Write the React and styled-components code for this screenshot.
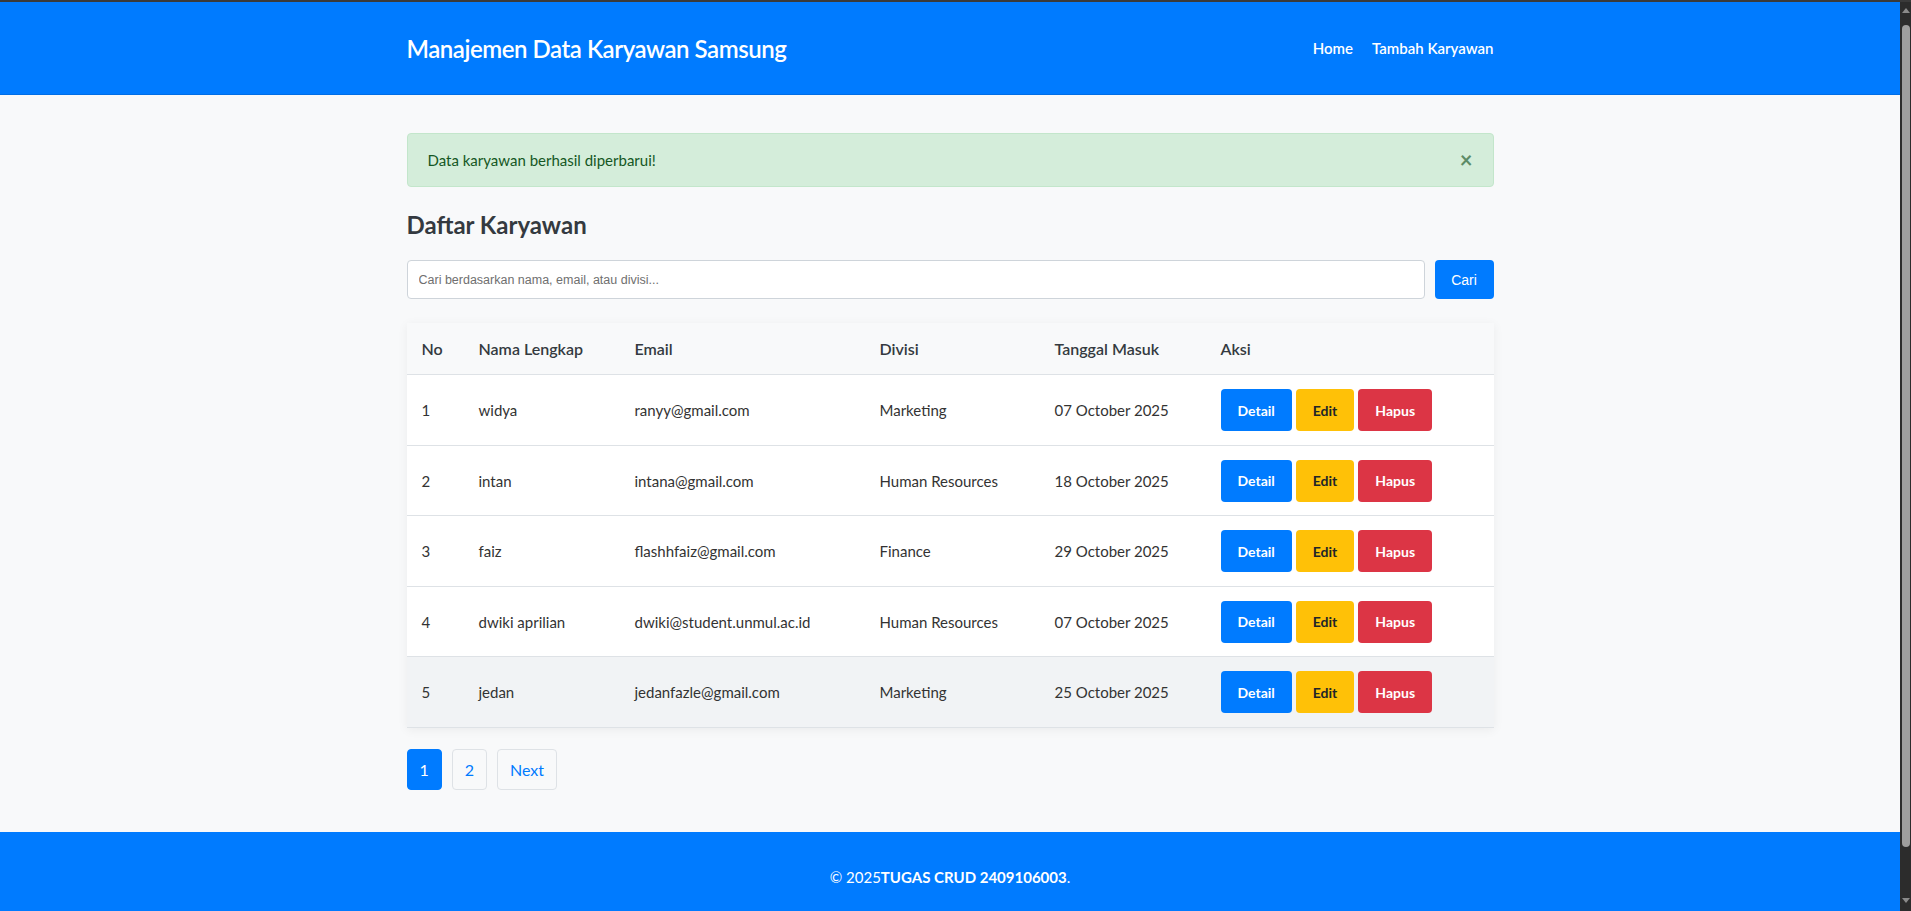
import styled, { createGlobalStyle } from 'styled-components';

const employees = [
    { no: 1, nama: 'widya', email: 'ranyy@gmail.com', divisi: 'Marketing', tanggal: '07 October 2025' },
    { no: 2, nama: 'intan', email: 'intana@gmail.com', divisi: 'Human Resources', tanggal: '18 October 2025' },
    { no: 3, nama: 'faiz', email: 'flashhfaiz@gmail.com', divisi: 'Finance', tanggal: '29 October 2025' },
    { no: 4, nama: 'dwiki aprilian', email: 'dwiki@student.unmul.ac.id', divisi: 'Human Resources', tanggal: '07 October 2025' },
    { no: 5, nama: 'jedan', email: 'jedanfazle@gmail.com', divisi: 'Marketing', tanggal: '25 October 2025' },
];

// lebar kolom diambil dari tabel aslinya
const columns = [
    { label: 'No', width: 57 },
    { label: 'Nama Lengkap', width: 156 },
    { label: 'Email', width: 245 },
    { label: 'Divisi', width: 175 },
    { label: 'Tanggal Masuk', width: 166 },
    { label: 'Aksi', width: 288 },
];

function App() {
    return (
        <>
            <GlobalStyle />
            <Frame>
                <Page>
                    <Header>
                        <HeaderInner>
                            <Brand>Manajemen Data Karyawan Samsung</Brand>
                            <Nav>
                                <NavLink href='#home'>Home</NavLink>
                                <NavLink href='#tambah'>Tambah Karyawan</NavLink>
                            </Nav>
                        </HeaderInner>
                    </Header>

                    <Main>
                        <Alert>
                            <span>Data karyawan berhasil diperbarui!</span>
                            <CloseBtn>×</CloseBtn>
                        </Alert>

                        <Title>Daftar Karyawan</Title>

                        <SearchRow>
                            <SearchInput placeholder='Cari berdasarkan nama, email, atau divisi...' />
                            <SearchBtn>Cari</SearchBtn>
                        </SearchRow>

                        <Table>
                            <colgroup>
                                {columns.map((c) => (
                                    <Col key={c.label} $w={c.width} />
                                ))}
                            </colgroup>
                            <thead>
                                <tr>
                                    {columns.map((c) => (
                                        <Th key={c.label}>{c.label}</Th>
                                    ))}
                                </tr>
                            </thead>
                            <tbody>
                                {employees.map((e) => (
                                    <Row key={e.no} $hover={e.no === 5}>
                                        <Td>{e.no}</Td>
                                        <Td>{e.nama}</Td>
                                        <Td>{e.email}</Td>
                                        <Td>{e.divisi}</Td>
                                        <Td>{e.tanggal}</Td>
                                        <Td>
                                            <Actions>
                                                <ActionBtn $variant='detail'>Detail</ActionBtn>
                                                <ActionBtn $variant='edit'>Edit</ActionBtn>
                                                <ActionBtn $variant='hapus'>Hapus</ActionBtn>
                                            </Actions>
                                        </Td>
                                    </Row>
                                ))}
                            </tbody>
                        </Table>

                        <Pagination>
                            <PageBtn $active>1</PageBtn>
                            <PageBtn>2</PageBtn>
                            <PageBtn>Next</PageBtn>
                        </Pagination>
                    </Main>

                    <Footer>
                        © 2025<strong>TUGAS CRUD 2409106003</strong>.
                    </Footer>
                </Page>

                <ScrollTrack>
                    <ArrowUp />
                    <Thumb />
                    <ArrowDown />
                </ScrollTrack>
            </Frame>
        </>
    );
}

const GlobalStyle = createGlobalStyle`
    html, body {
        margin: 0;
        padding: 0;
        overflow: hidden;
        background: #f8f9fa;
    }
    body {
        font-family: 'Segoe UI', Lato, 'Open Sans', sans-serif;
        color: #333;
    }
    * {
        box-sizing: border-box;
    }
`;

const Frame = styled.div`
    display: flex;
    height: 100vh;
    border-top: 2px solid #3a3a3a;
`;

const Page = styled.div`
    flex: 1;
    min-width: 0;
    display: flex;
    flex-direction: column;
    overflow: hidden;
    background: #f8f9fa;
`;

const Header = styled.header`
    flex-shrink: 0;
    height: 93px;
    background: #007bff;
    border-bottom: 1px solid #006ee6;
`;

const HeaderInner = styled.div`
    max-width: 1087px;
    height: 100%;
    margin: 0 auto;
    display: flex;
    justify-content: space-between;
    align-items: center;
`;

const Brand = styled.h1`
    margin: 0;
    font-size: 24px;
    font-weight: 600;
    letter-spacing: -0.45px;
    color: #fff;
`;

const Nav = styled.nav`
    display: flex;
    gap: 19px;
`;

const NavLink = styled.a`
    color: #fff;
    font-size: 15px;
    font-weight: 600;
    text-decoration: none;
`;

const Main = styled.main`
    flex-shrink: 0;
    width: 100%;
    max-width: 1087px;
    margin: 0 auto;
    padding: 38px 0 42px;
`;

const Alert = styled.div`
    display: flex;
    justify-content: space-between;
    align-items: center;
    padding: 15px 20px;
    line-height: 22px;
    font-size: 15px;
    color: #155724;
    background: #d4edda;
    border: 1px solid #c3e6cb;
    border-radius: 4px;
`;

const CloseBtn = styled.span`
    font-size: 22px;
    font-weight: 700;
    line-height: 22px;
    color: #5d8c67;
    cursor: pointer;
`;

const Title = styled.h2`
    margin: 23px 0 20px;
    font-size: 24px;
    line-height: 30px;
    font-weight: 700;
    color: #343a40;
`;

const SearchRow = styled.div`
    display: flex;
    gap: 10px;
    height: 39px;
    margin-bottom: 24px;
`;

const SearchInput = styled.input`
    flex: 1;
    padding: 0 11px;
    font-family: 'Liberation Sans', Arial, sans-serif;
    font-size: 12.5px;
    border: 1px solid #ced4da;
    border-radius: 4px;
    background: #fff;

    &::placeholder {
        color: #6f6f6f;
    }
`;

const SearchBtn = styled.button`
    width: 59px;
    font-family: 'Liberation Sans', Arial, sans-serif;
    font-size: 14px;
    color: #fff;
    background: #007bff;
    border: none;
    border-radius: 4px;
`;

const Table = styled.table`
    width: 100%;
    table-layout: fixed;
    border-collapse: collapse;
    background: #fff;
    box-shadow: 0 2px 10px rgba(0, 0, 0, 0.06);
`;

const Col = styled.col`
    width: ${(p) => p.$w}px;
`;

const Th = styled.th`
    padding: 15px;
    line-height: 21px;
    text-align: left;
    font-size: 16px;
    font-weight: 600;
    color: #343a40;
    background: #f8f9fa;
    border-bottom: 1px solid #dee2e6;
`;

const Row = styled.tr`
    background: ${(p) => (p.$hover ? '#f1f3f5' : '#fff')};
`;

const Td = styled.td`
    padding: 14px 15px 13.5px;
    font-size: 15px;
    color: #333;
    border-bottom: 1px solid #dee2e6;
    white-space: nowrap;
`;

const Actions = styled.div`
    display: flex;
    gap: 4px;
`;

const btnColors = {
    detail: { bg: '#007bff', fg: '#fff' },
    edit: { bg: '#ffc107', fg: '#212529' },
    hapus: { bg: '#dc3545', fg: '#fff' },
};

const ActionBtn = styled.button`
    height: 42px;
    padding: 0 17px;
    font-family: inherit;
    font-size: 14px;
    font-weight: 700;
    color: ${(p) => btnColors[p.$variant].fg};
    background: ${(p) => btnColors[p.$variant].bg};
    border: none;
    border-radius: 4px;
`;

const Pagination = styled.div`
    display: flex;
    gap: 10px;
    margin-top: 21px;
`;

const PageBtn = styled.button`
    height: 41px;
    padding: 0 12px;
    font-family: inherit;
    font-size: 16px;
    color: ${(p) => (p.$active ? '#fff' : '#007bff')};
    background: ${(p) => (p.$active ? '#007bff' : 'transparent')};
    border: 1px solid ${(p) => (p.$active ? '#007bff' : '#dee2e6')};
    border-radius: 4px;
`;

const Footer = styled.footer`
    flex-shrink: 0;
    padding: 33px 0;
    text-align: center;
    font-size: 15px;
    line-height: 24px;
    color: #fff;
    background: #007bff;
`;

const ScrollTrack = styled.div`
    width: 11px;
    flex-shrink: 0;
    display: flex;
    flex-direction: column;
    align-items: center;
    padding: 6px 0 8px;
    background: #2c2c2c;
`;

const ArrowUp = styled.div`
    width: 0;
    height: 0;
    border-left: 4px solid transparent;
    border-right: 4px solid transparent;
    border-bottom: 5px solid #8a8a8a;
`;

const ArrowDown = styled.div`
    width: 0;
    height: 0;
    margin-top: auto;
    border-left: 4px solid transparent;
    border-right: 4px solid transparent;
    border-top: 5px solid #8a8a8a;
`;

const Thumb = styled.div`
    width: 8px;
    height: 822px;
    margin-top: 12px;
    border-radius: 4px;
    background: #9e9e9e;
`;

export default App;
